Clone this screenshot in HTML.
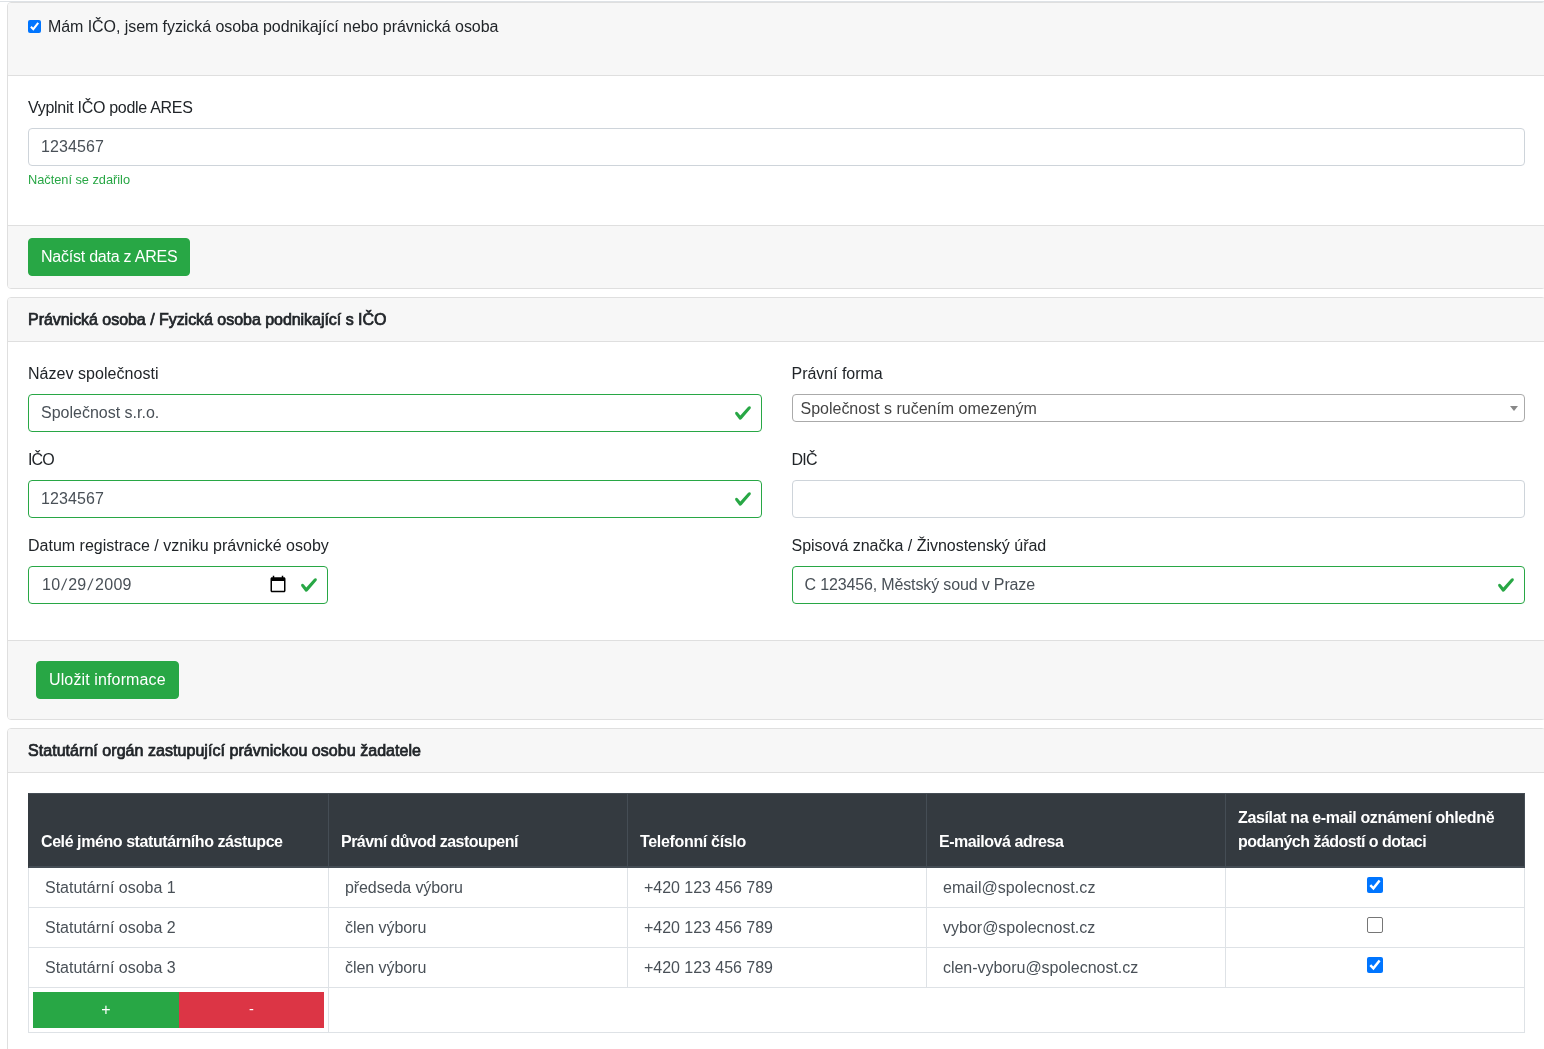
<!DOCTYPE html>
<html lang="cs">
<head>
<meta charset="utf-8">
<title>Identita žadatele</title>
<style>
*,*::before,*::after{box-sizing:border-box}
html,body{margin:0;padding:0}
body{width:1544px;height:1049px;overflow:hidden;background:#fff;color:#212529;
  font-family:"Liberation Sans",sans-serif;font-size:16px;line-height:24px;position:relative}
#page{position:absolute;left:0;top:0;width:1544px;height:1049px;overflow:hidden;will-change:transform}
.topline{position:absolute;left:0;top:1px;width:1544px;height:1px;background:#dee2e6}
.card{position:absolute;left:7px;width:1539px;border:1px solid #dfdfdf;border-radius:4px;background:#fff}
.hdr{background:#f7f7f7;border-bottom:1px solid #dfdfdf;padding:12px 20px;border-radius:3px 3px 0 0}
.ftr{background:#f7f7f7;border-top:1px solid #dfdfdf;padding:12px 20px;border-radius:0 0 3px 3px}
.body{padding:20px}
.title{font-weight:normal;-webkit-text-stroke:0.72px #212529;font-size:16px;line-height:19.2px;height:19.2px;white-space:nowrap}
label{display:block;margin:0 0 8px 0;height:24px;white-space:nowrap}
.inp{display:block;width:100%;height:38px;border:1px solid #ced4da;border-radius:4px;background:#fff;
  padding:6px 12px;color:#495057;font-size:16px;line-height:24px;position:relative;white-space:nowrap}
.inp.ok{border-color:#28a745}
.chk{position:absolute;right:9px;top:9px;width:18px;height:18px}
.cal{position:absolute;left:240px;top:8.2px;width:18px;height:18px}
.fg{margin-bottom:16px}
.btn{display:inline-block;height:38px;border-radius:4px;background:#28a745;border:1px solid #28a745;color:#fff;
  padding:6px 12px;font-size:16px;line-height:24px;white-space:nowrap;vertical-align:top}
.cb{display:inline-block;width:13px;height:13px;border-radius:2px;background:#0075ff;position:relative;vertical-align:top}
.cb svg{position:absolute;left:0;top:0;width:100%;height:100%}
.cb.big{width:16px;height:16px;border-radius:2px}
.cb.off{background:#fff;border:1px solid #767676}
.row{display:flex;margin:0 -15px}
.col{flex:0 0 50%;padding:0 15px}
.sel2{display:block;width:100%;height:28px;border:1px solid #aaa;border-radius:4px;background:#fff;padding:0 20px 0 8px;
  color:#444;font-size:16px;line-height:28px;position:relative;white-space:nowrap;overflow:hidden}
.sel2 i{position:absolute;right:6px;top:11px;width:0;height:0;border-left:4px solid transparent;border-right:4px solid transparent;border-top:5px solid #888}
.tbl{width:1497px}
.tr{display:flex}
.th{background:#343a40;color:#fff;font-weight:bold;height:75px;padding:12px 0 12px 12px;border-top:1px solid #454d55;border-left:1px solid #454d55;
  border-bottom:2px solid #454d55;display:flex;flex-direction:column;justify-content:flex-end;line-height:24px;white-space:nowrap}
.th:first-child{border-left-color:#343a40}
.td{height:40px;padding:7.5px 0 0 16px;border-left:1px solid #dee2e6;border-bottom:1px solid #dee2e6;color:#495057;line-height:24px;white-space:nowrap}
.w0{width:300px}.w1{width:299px}
.th.last{width:300px;border-right:1px solid #454d55}
.td.last{width:300px;border-right:1px solid #dee2e6}
.td.c{padding:9px 0 0 0;text-align:center}
.td.c .cb{display:block;margin:0 auto}
.pm{display:flex;width:291px;height:36px}
.pm b{font-weight:normal;font-size:14.5px;position:relative;top:-1.2px}
.pm span{color:#fff;text-align:center;line-height:36px;font-size:16px}

.d{letter-spacing:0.25px}
.d0{margin-left:1px}
.s1,.s2{display:inline-block;text-align:center;transform:skewX(-9deg)}
.s1{width:7.9px}
.s2{width:8.6px}
</style>
</head>
<body>
<div id="page">

<div class="topline"></div>

<!-- CARD 1 -->
<div class="card" style="top:2px">
  <div class="hdr" style="height:73px">
    <span class="cb" style="margin-top:5px"><svg viewBox="0 0 13 13"><path d="M2.9 6.7 L5.3 9.1 L10.2 2.9" fill="none" stroke="#fff" stroke-width="2.05"/></svg></span><span style="margin-left:7px"><span style="letter-spacing:-0.069px">Mám IČO, jsem fyzická osoba podnikající nebo právnická osoba</span></span>
  </div>
  <div class="body" style="height:149px">
    <label><span style="letter-spacing:-0.293px">Vyplnit IČO podle ARES</span></label>
    <div class="inp"><span style="letter-spacing:0.094px">1234567</span></div>
    <div style="color:#28a745;font-size:12.8px;line-height:19.2px;margin-top:4px"><span style="letter-spacing:-0.023px">Načtení se zdařilo</span></div>
  </div>
  <div class="ftr" style="height:63px"><span class="btn"><span style="letter-spacing:-0.232px">Načíst data z ARES</span></span></div>
</div>

<!-- CARD 2 -->
<div class="card" style="top:297px">
  <div class="hdr" style="height:44px"><div class="title"><span style="letter-spacing:-0.037px">Právnická osoba / Fyzická osoba podnikající s IČO</span></div></div>
  <div class="body" style="height:298px">
    <div class="row">
      <div class="col"><div class="fg"><label><span style="letter-spacing:0.039px">Název společnosti</span></label><div class="inp ok">Společnost s.r.o.<svg class="chk" viewBox="0 0 8 8"><path fill="#28a745" d="M2.3 6.73L.6 4.53c-.4-1.04.46-1.4 1.1-.8l1.1 1.4 3.4-3.8c.6-.63 1.6-.27 1.2.7l-4 4.6c-.43.5-.8.4-1.1.1z"/></svg></div></div></div>
      <div class="col"><div class="fg"><label><span style="letter-spacing:-0.036px">Právní forma</span></label><div class="sel2"><span style="letter-spacing:-0.009px">Společnost s ručením omezeným</span><i></i></div></div></div>
    </div>
    <div class="row">
      <div class="col"><div class="fg"><label><span style="letter-spacing:-0.891px">IČO</span></label><div class="inp ok"><span style="letter-spacing:0.094px">1234567</span><svg class="chk" viewBox="0 0 8 8"><path fill="#28a745" d="M2.3 6.73L.6 4.53c-.4-1.04.46-1.4 1.1-.8l1.1 1.4 3.4-3.8c.6-.63 1.6-.27 1.2.7l-4 4.6c-.43.5-.8.4-1.1.1z"/></svg></div></div></div>
      <div class="col"><div class="fg"><label><span style="letter-spacing:-0.766px">DIČ</span></label><div class="inp"></div></div></div>
    </div>
    <div class="row">
      <div class="col"><div class="fg"><label><span style="letter-spacing:0.006px">Datum registrace / vzniku právnické osoby</span></label><div class="inp ok" style="width:300px"><span class="d d0">10</span><span class="s1">/</span><span class="d">29</span><span class="s2">/</span><span class="d">2009</span><svg class="cal" viewBox="0 0 24 24"><path fill="#000" d="M20 3h-1V1h-2v2H7V1H5v2H4c-1.1 0-2 .9-2 2v16c0 1.1.9 2 2 2h16c1.1 0 2-.9 2-2V5c0-1.1-.9-2-2-2zm0 18H4V8h16v13z"/></svg><svg class="chk" viewBox="0 0 8 8"><path fill="#28a745" d="M2.3 6.73L.6 4.53c-.4-1.04.46-1.4 1.1-.8l1.1 1.4 3.4-3.8c.6-.63 1.6-.27 1.2.7l-4 4.6c-.43.5-.8.4-1.1.1z"/></svg></div></div></div>
      <div class="col"><div class="fg"><label><span style="letter-spacing:-0.015px">Spisová značka / Živnostenský úřad</span></label><div class="inp ok"><span style="letter-spacing:-0.145px">C 123456, Městský soud v Praze</span><svg class="chk" viewBox="0 0 8 8"><path fill="#28a745" d="M2.3 6.73L.6 4.53c-.4-1.04.46-1.4 1.1-.8l1.1 1.4 3.4-3.8c.6-.63 1.6-.27 1.2.7l-4 4.6c-.43.5-.8.4-1.1.1z"/></svg></div></div></div>
    </div>
  </div>
  <div class="ftr" style="height:79px;padding:20px 28px"><span class="btn"><span style="letter-spacing:0.127px">Uložit informace</span></span></div>
</div>

<!-- CARD 3 -->
<div class="card" style="top:728px;height:340px">
  <div class="hdr" style="height:44px"><div class="title"><span style="letter-spacing:0.047px">Statutární orgán zastupující právnickou osobu žadatele</span></div></div>
  <div class="body">
    <div class="tbl">
      <div class="tr"><div class="th w0"><div><span style="letter-spacing:-0.424px">Celé jméno statutárního zástupce</span></div></div><div class="th w1"><div><span style="letter-spacing:-0.544px">Právní důvod zastoupení</span></div></div><div class="th w1"><div><span style="letter-spacing:-0.326px">Telefonní číslo</span></div></div><div class="th w1"><div><span style="letter-spacing:-0.455px">E-mailová adresa</span></div></div><div class="th w1 last"><div><span style="letter-spacing:-0.361px">Zasílat na e-mail oznámení ohledně</span></div><div><span style="letter-spacing:-0.512px">podaných žádostí o dotaci</span></div></div></div>
      <div class="tr"><div class="td w0">Statutární osoba 1</div><div class="td w1"><span style="letter-spacing:-0.087px">předseda výboru</span></div><div class="td w1"><span style="letter-spacing:-0.036px">+420 123 456 789</span></div><div class="td w1"><span style="letter-spacing:0.055px">email@spolecnost.cz</span></div><div class="td w1 last c"><span class="cb big"><svg viewBox="0 0 16 16"><path d="M3.3 8.2 L6.4 11.3 L12.6 3.4" fill="none" stroke="#fff" stroke-width="2.5"/></svg></span></div></div>
      <div class="tr"><div class="td w0">Statutární osoba 2</div><div class="td w1"><span style="letter-spacing:-0.054px">člen výboru</span></div><div class="td w1"><span style="letter-spacing:-0.036px">+420 123 456 789</span></div><div class="td w1">vybor@spolecnost.cz</div><div class="td w1 last c"><span class="cb big off"></span></div></div>
      <div class="tr"><div class="td w0">Statutární osoba 3</div><div class="td w1"><span style="letter-spacing:-0.054px">člen výboru</span></div><div class="td w1"><span style="letter-spacing:-0.036px">+420 123 456 789</span></div><div class="td w1"><span style="letter-spacing:-0.029px">clen-vyboru@spolecnost.cz</span></div><div class="td w1 last c"><span class="cb big"><svg viewBox="0 0 16 16"><path d="M3.3 8.2 L6.4 11.3 L12.6 3.4" fill="none" stroke="#fff" stroke-width="2.5"/></svg></span></div></div>
      <div class="tr"><div class="td w0" style="height:45px;padding:4px 0 0 4px"><div class="pm"><span style="background:#28a745;width:146px">+</span><span style="background:#dc3545;width:145px"><b>-</b></span></div></div><div class="td last" style="width:1197px;height:45px"></div></div>
    </div>
  </div>
</div>

</div>
</body>
</html>
